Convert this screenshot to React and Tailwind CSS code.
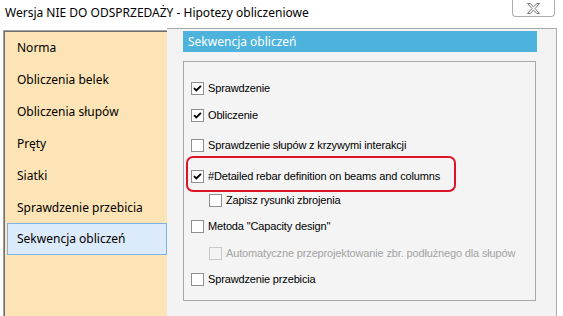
import React from 'react';

const navItems = [
  'Norma',
  'Obliczenia belek',
  'Obliczenia słupów',
  'Pręty',
  'Siatki',
  'Sprawdzenie przebicia',
  'Sekwencja obliczeń',
];

const Checkbox = ({ checked, disabled }) => (
  <span
    className={
      'w-[13px] h-[13px] shrink-0 border flex items-center justify-center ' +
      (disabled ? 'border-[#c9c9c9] bg-[#f4f4f4]' : 'border-[#8e8f8f] bg-white')
    }
  >
    {checked && (
      <svg width="11" height="11" viewBox="0 0 11 11">
        <path d="M2 5.2 L4.3 7.5 L9 2.8" fill="none" stroke="#000" strokeWidth="1.9" />
      </svg>
    )}
  </span>
);

const Row = ({ label, checked, disabled, indent, className }) => (
  <div className={'flex items-center h-[16px] ' + (indent ? 'pl-[25px] ' : 'pl-[7px] ') + (className || '')}>
    <Checkbox checked={checked} disabled={disabled} />
    <span
      className={
        'ml-[4px] text-[11px] tracking-[-0.15px] whitespace-nowrap font-["Liberation_Sans",Arial,sans-serif] ' +
        (disabled ? 'text-[#a3a3a3]' : 'text-black')
      }
    >
      {label}
    </span>
  </div>
);

const App = () => {
  return (
    <div className='w-[563px] h-[316px] overflow-hidden bg-white font-["Noto_Sans",sans-serif] text-[12px] text-black flex flex-col'>
      {/* title bar */}
      <div className="h-[28px] shrink-0 flex items-start justify-between">
        <span className="pl-[5px] pt-[4px] text-[12px] leading-[18px] whitespace-nowrap">
          Wersja NIE DO ODSPRZEDAŻY - Hipotezy obliczeniowe
        </span>
        <div className="mr-[8px] w-[43px] h-[17px] border border-t-0 border-[#adadad] rounded-b-[4px] flex items-center justify-center bg-white">
          <svg width="13" height="11" viewBox="0 0 13 11">
            <polygon
              points="0.5,0.5 3.3,0.5 6.5,3.9 9.7,0.5 12.5,0.5 8,5.5 12.5,10.5 9.7,10.5 6.5,7.1 3.3,10.5 0.5,10.5 5,5.5"
              fill="#fff"
              stroke="#666"
              strokeWidth="0.9"
            />
          </svg>
        </div>
      </div>

      {/* body */}
      <div className="flex flex-1 min-h-0 pl-[3px] pr-[6px]">
        {/* left navigation */}
        <div className="w-[164px] mt-[2px] bg-[#fce4b6] border-t border-l border-[#a0a0a0] shadow-[inset_1px_1px_0_#6f6f6f] pt-[1px] pl-[1px]">
          {navItems.map((item, i) => (
            <div
              key={i}
              className={
                'h-[32px] flex items-center text-[12px] whitespace-nowrap ' +
                (i === navItems.length - 1
                  ? 'ml-[2px] pl-[9px] bg-[#dcebfb] border border-[#7fb3e6] mt-[-1px]'
                  : 'pl-[12px]')
              }
            >
              {item}
            </div>
          ))}
        </div>

        {/* right content */}
        <div className="flex-1 bg-[#f3f3f3] border-t border-r border-[#a9a9a9] pl-[16px] pr-[19px] pt-[2px]">
          <div className="h-[21px] bg-[#4db3dd] text-white text-[12px] flex items-center pl-[5px] whitespace-nowrap">
            Sekwencja obliczeń
          </div>
          <div className="mt-[9px] mr-[1px] h-[240px] border border-[#a8a8a8] bg-[#f4f4f4] pt-[18px]">
            <Row label="Sprawdzenie" checked />
            <Row label="Obliczenie" checked className="mt-[11px]" />
            <Row label="Sprawdzenie słupów z krzywymi interakcji" className="mt-[14px]" />
            <div className="relative mt-[15px]">
              <Row label="#Detailed rebar definition on beams and columns" checked />
              <div className="absolute left-[2px] top-[-12px] w-[270px] h-[36px] border-2 border-[#dc1428] rounded-[7px]" />
            </div>
            <Row label="Zapisz rysunki zbrojenia" indent className="mt-[8px]" />
            <Row label='Metoda "Capacity design"' className="mt-[10px]" />
            <Row
              label="Automatyczne przeprojektowanie zbr. podłużnego dla słupów"
              indent
              disabled
              className="mt-[11px]"
            />
            <Row label="Sprawdzenie przebicia" className="mt-[10px]" />
          </div>
        </div>
      </div>
    </div>
  );
};

export default App;
